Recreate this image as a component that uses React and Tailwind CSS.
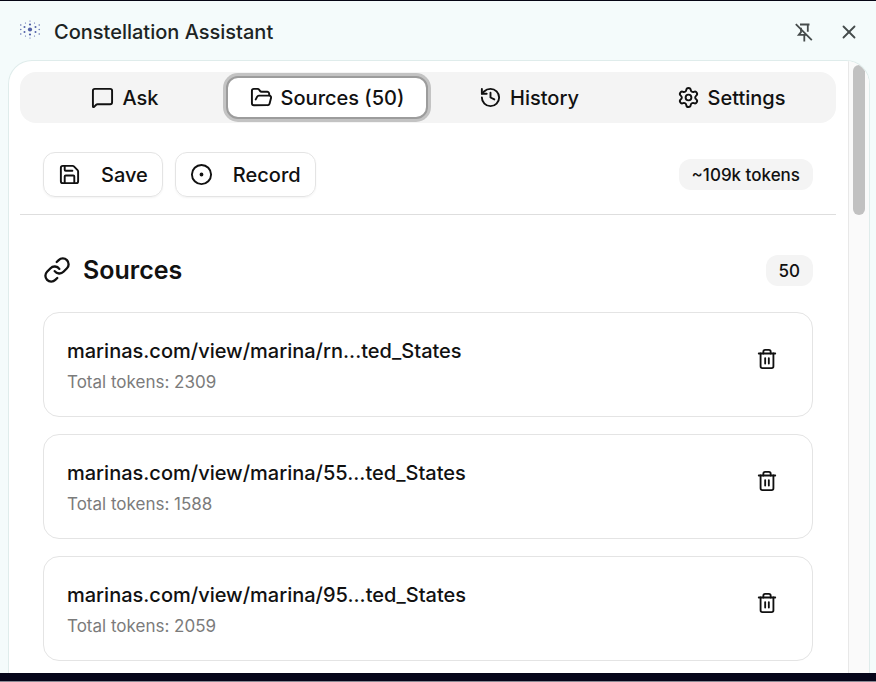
import {
    CircleDot,
    FolderOpen,
    History,
    Link,
    MessageSquare,
    Save,
    Settings,
    Trash2,
    X,
} from "lucide-react";

const tabs = [
    { id: "ask", label: "Ask", icon: MessageSquare },
    { id: "sources", label: "Sources (50)", icon: FolderOpen },
    { id: "history", label: "History", icon: History },
    { id: "settings", label: "Settings", icon: Settings },
];

const sources = [
    { id: 1, url: "marinas.com/view/marina/rn...ted_States", tokens: 2309 },
    { id: 2, url: "marinas.com/view/marina/55...ted_States", tokens: 1588 },
    { id: 3, url: "marinas.com/view/marina/95...ted_States", tokens: 2059 },
];

// Dots of the logo: [x, y, radius]
const logoDots = [
    [10, 10.5, 2.1], [10, 5.5, 1.1], [10, 15.5, 1.1], [4.5, 8, 1], [15.5, 8, 1],
    [4.5, 13, 1], [15.5, 13, 1], [10, 2, 0.6], [10, 19, 0.6],
    [5.5, 4, 0.6], [14.5, 4, 0.6], [5.5, 17, 0.6], [14.5, 17, 0.6],
    [0.8, 6, 0.7], [19.2, 6, 0.7], [0.8, 10.5, 0.7], [19.2, 10.5, 0.7],
    [0.8, 15, 0.7], [19.2, 15, 0.7],
];

function Logo() {
    return (
        <svg viewBox="0 0 20 20" className="size-5 shrink-0 fill-[#5160a8]" aria-hidden="true">
            {logoDots.map(([cx, cy, r]) => (
                <circle key={`${cx}-${cy}`} cx={cx} cy={cy} r={r} />
            ))}
        </svg>
    );
}

function PinOffIcon() {
    return (
        <svg viewBox="0 0 20 20" className="size-5 fill-none stroke-[#454b4b]" strokeWidth="1.8" aria-hidden="true">
            <path d="M6 2.5h9.5M13.8 2.5v7.2M7 5.8v4.4l-2.2 2.6h7.6M10.3 12.8v6.7" />
            <path d="M1.8 2.2l16 16" />
        </svg>
    );
}

function Badge({ children }) {
    return (
        <span className="rounded-xl bg-[#f4f4f4] px-[13px] pt-[5px] pb-[3px] text-[17px] leading-[23px] font-medium">
            {children}
        </span>
    );
}

function SourceCard({ source }) {
    return (
        <li className="flex items-start justify-between rounded-2xl border border-[#e4e4e4] px-[23px] pt-6 pb-[22px]">
            <div className="min-w-0">
                <h3 className="truncate text-[20px] leading-7 font-medium">{source.url}</h3>
                <p className="mt-[5px] text-[17px] leading-6 text-[#7b7b7b]">Total tokens: {source.tokens}</p>
            </div>
            <button type="button" aria-label="Delete source" className="flex size-11 shrink-0 items-center justify-center">
                <Trash2 size={22} />
            </button>
        </li>
    );
}

export default function App() {
    return (
        <div className="flex h-screen flex-col overflow-hidden border-t border-[#050514] bg-[#f4fbfb] font-['Inter','Liberation_Sans',sans-serif] text-[#111111]">
            {/* Side panel title bar */}
            <header className="flex h-[59px] shrink-0 items-center justify-between pr-4 pb-1 pl-5">
                <div className="flex items-center gap-[14px]">
                    <Logo />
                    <h1 className="pt-[6px] text-[20px] leading-7 font-medium text-[#1c2424]">Constellation Assistant</h1>
                </div>
                <div className="flex items-center gap-6 pt-[6px] text-[#454b4b]">
                    <button type="button" aria-label="Unpin side panel">
                        <PinOffIcon />
                    </button>
                    <button type="button" aria-label="Close side panel">
                        <X size={22} />
                    </button>
                </div>
            </header>

            {/* Panel */}
            <div className="mr-[6px] ml-2 flex min-h-0 flex-1 overflow-hidden rounded-t-[24px] border-x border-t border-[#dfeceb] bg-white">
                <main className="min-w-0 flex-1 overflow-hidden pt-[11px] pr-3 pl-[11px]">
                    <nav className="grid grid-cols-4 rounded-2xl bg-[#f4f4f4] p-1" role="tablist">
                        {tabs.map(({ id, label, icon: Icon }) => (
                            <button
                                key={id}
                                type="button"
                                role="tab"
                                aria-selected={id === "sources"}
                                className={
                                    id === "sources"
                                        ? "flex h-[43px] items-center justify-center gap-2 rounded-xl border-2 border-[#9c9c9c] bg-white text-[20px] font-medium whitespace-nowrap ring-3 ring-[#c3c3c3]"
                                        : "flex h-[43px] items-center justify-center gap-2 rounded-xl text-[20px] font-medium whitespace-nowrap"
                                }
                            >
                                <Icon size={23} />
                                {label}
                            </button>
                        ))}
                    </nav>

                    <div className="mt-[29px] flex items-center justify-between border-b border-[#dedede] px-[23px] pb-[17px]">
                        <div className="flex gap-3">
                            <button type="button" className="flex h-[45px] items-center gap-5 rounded-xl border border-[#e4e4e4] px-[14px] text-[20px] font-medium shadow-xs">
                                <Save size={23} />
                                Save
                            </button>
                            <button type="button" className="flex h-[45px] items-center gap-5 rounded-xl border border-[#e4e4e4] px-[14px] text-[20px] font-medium shadow-xs">
                                <CircleDot size={23} />
                                Record
                            </button>
                        </div>
                        <Badge>~109k tokens</Badge>
                    </div>

                    <section className="px-[23px] pt-[39px]">
                        <div className="flex items-center justify-between">
                            <h2 className="flex items-center gap-3 text-[25px] leading-8 font-semibold">
                                <Link size={28} />
                                Sources
                            </h2>
                            <Badge>50</Badge>
                        </div>
                        <ul className="mt-[26px] flex flex-col gap-[17px]">
                            {sources.map((source) => (
                                <SourceCard key={source.id} source={source} />
                            ))}
                        </ul>
                    </section>
                </main>

                {/* Scrollbar track */}
                <div className="flex w-[21px] shrink-0 justify-center border-l border-[#e8e8e8] bg-[#fafafa] pt-1">
                    <div className="h-[150px] w-3 rounded-full bg-[#c1c1c1]" />
                </div>
            </div>

            <footer className="h-[9px] shrink-0 border-b border-[#8a8a94] bg-[#06061a]" />
        </div>
    );
}
